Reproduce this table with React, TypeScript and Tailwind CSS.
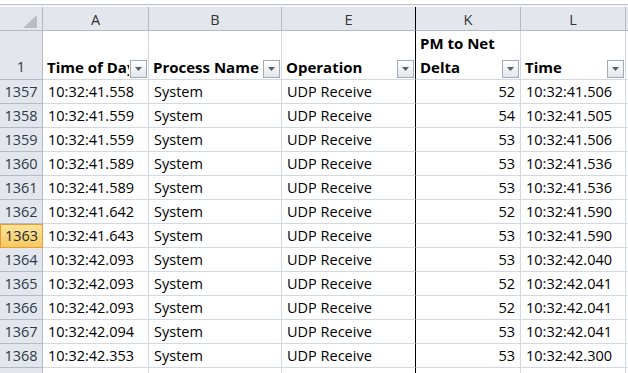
import React from 'react';

const rows: [number, string, number, string][] = [
  [1357, '10:32:41.558', 52, '10:32:41.506'],
  [1358, '10:32:41.559', 54, '10:32:41.505'],
  [1359, '10:32:41.559', 53, '10:32:41.506'],
  [1360, '10:32:41.589', 53, '10:32:41.536'],
  [1361, '10:32:41.589', 53, '10:32:41.536'],
  [1362, '10:32:41.642', 52, '10:32:41.590'],
  [1363, '10:32:41.643', 53, '10:32:41.590'],
  [1364, '10:32:42.093', 53, '10:32:42.040'],
  [1365, '10:32:42.093', 52, '10:32:42.041'],
  [1366, '10:32:42.093', 52, '10:32:42.041'],
  [1367, '10:32:42.094', 53, '10:32:42.041'],
  [1368, '10:32:42.353', 53, '10:32:42.300'],
];

const FilterButton: React.FC = () => (
  <div className="absolute right-[1px] bottom-[1px] w-[17px] h-[18px] border border-[#a3abb6] bg-linear-to-b from-white to-[#e2e6ec] flex items-center justify-center">
    <svg width="7" height="4" viewBox="0 0 7 4">
      <path d="M0 0h7L3.5 4z" fill="#5a5f66" />
    </svg>
  </div>
);

const colHdr = 'flex items-center justify-center pt-[2px] bg-[#e3e7ed] border-r border-b border-[#b3bac4] text-[#333] ';
const rowHdr = 'flex items-center justify-center bg-[#e3e7ed] border-r border-b border-[#b3bac4] text-[#2e3a48]';
const cell = 'border-r border-b border-[#d3d9e3] flex items-center px-[5px] whitespace-nowrap overflow-hidden';
const head = 'relative border-r border-b border-[#d3d9e3] flex flex-col justify-end pl-[4px] pr-[19px] text-[15px] font-bold leading-[24px] whitespace-nowrap overflow-hidden';

export default function App() {
  return (
    <div className="w-[628px] h-[373px] overflow-hidden bg-white text-[14.5px] text-black" style={{ fontFamily: '"Open Sans", Lato, sans-serif' }}>
      <div className="h-[7px] flex flex-col">
        <div className="h-[4px] bg-white" />
        <div className="h-[1px] bg-[#b9bfc7]" />
        <div className="h-[2px] bg-[#f4f6f8]" />
      </div>
      <div className="grid grid-cols-[43px_106px_133px_134px_105px_105px_2px] grid-rows-[24px_49px] auto-rows-[24px]">
        <div className={colHdr + 'relative'}>
          <svg className="absolute left-[23px] top-[8px]" width="14" height="13" viewBox="0 0 14 13">
            <path d="M14 0V13H0z" fill="#b9bdc3" />
          </svg>
        </div>
        <div className={colHdr}>A</div>
        <div className={colHdr}>B</div>
        <div className={colHdr + '!border-r-black'}>E</div>
        <div className={colHdr}>K</div>
        <div className={colHdr}>L</div>
        <div className="bg-[#e3e7ed] border-b border-[#b3bac4]" />

        <div className={rowHdr + ' items-end leading-[24px]'}>1</div>
        <div className={head}>
          <span className="overflow-hidden">Time of Day</span>
          <FilterButton />
        </div>
        <div className={head}>
          Process Name
          <FilterButton />
        </div>
        <div className={head + ' border-r-black'}>
          Operation
          <FilterButton />
        </div>
        <div className={head}>
          <span>PM to Net</span>
          <span>Delta</span>
          <FilterButton />
        </div>
        <div className={head}>
          Time
          <FilterButton />
        </div>
        <div className="border-b border-[#d3d9e3]" />

        {rows.map(([n, t, d, t2]) => (
          <React.Fragment key={n}>
            <div
              className={
                n === 1363
                  ? 'flex items-center justify-center bg-linear-to-b from-[#fbe39a] to-[#f6c95e] border border-[#e99b36] text-[#1f2a36]'
                  : rowHdr
              }
            >
              {n}
            </div>
            <div className={cell}>{t}</div>
            <div className={cell}>System</div>
            <div className={cell + ' border-r-black'}>UDP Receive</div>
            <div className={cell + ' justify-end'}>{d}</div>
            <div className={cell}>{t2}</div>
            <div className="border-b border-[#d3d9e3]" />
          </React.Fragment>
        ))}

        <div className={rowHdr} />
        <div className={cell} />
        <div className={cell} />
        <div className={cell + ' border-r-black'} />
        <div className={cell} />
        <div className={cell} />
        <div />
      </div>
    </div>
  );
}
